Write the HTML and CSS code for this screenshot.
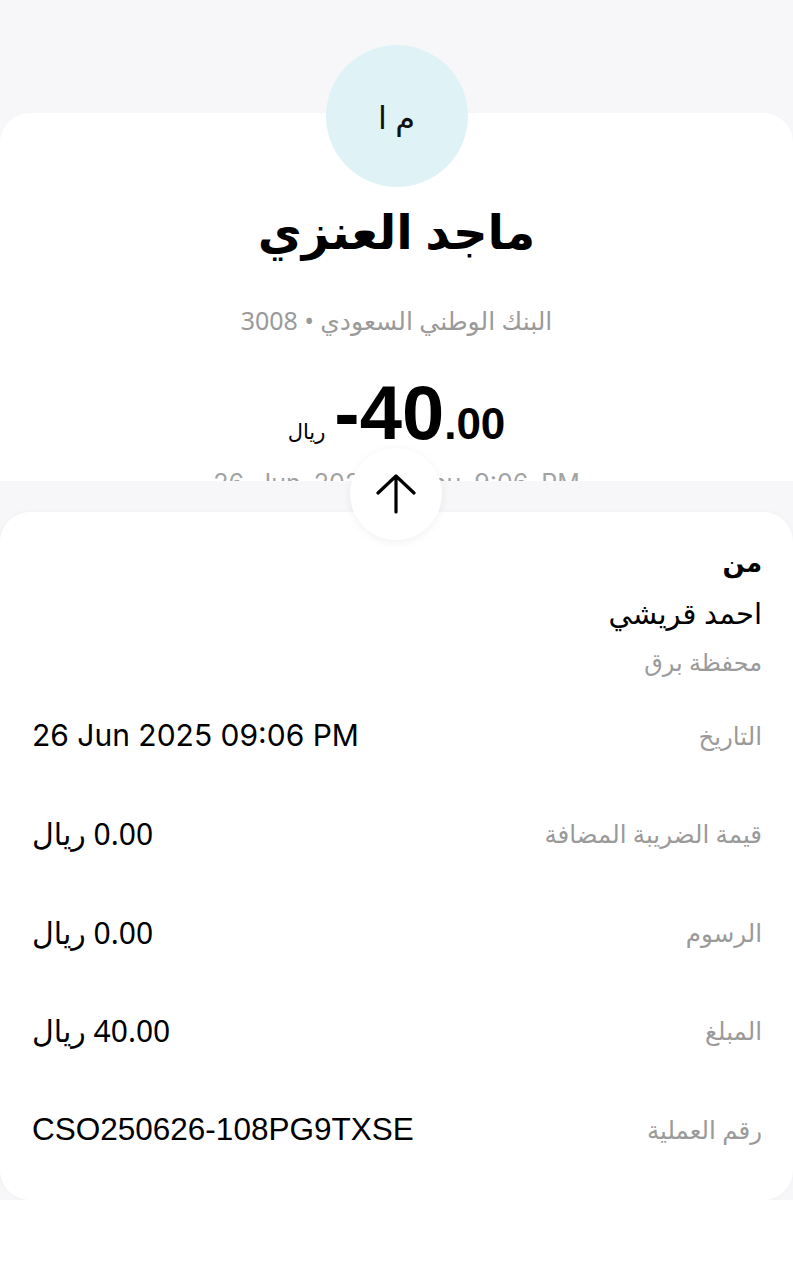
FILE: index.html
```html
<!DOCTYPE html>
<html lang="ar" dir="rtl">
<head>
<meta charset="utf-8">
<link rel="stylesheet" href="styles.css">
</head>
<body>
<div class="screen">
  <section class="head-card">
    <div class="avatar">م ا</div>
    <h1 class="name">ماجد العنزي</h1>
    <div class="bank">البنك الوطني السعودي • 3008</div>
    <div class="amount">
      <span class="cur">ريال</span>
      <span class="big">-40</span><span class="dec">.00</span>
    </div>
    <div class="date" dir="ltr">26 Jun 2025 • Thu 9:06 PM</div>
  </section>
  <div class="gap"></div>
  <div class="arrow">
    <svg width="44" height="44" viewBox="0 0 44 44" fill="none" stroke="#000" stroke-width="3.2" stroke-linecap="round" stroke-linejoin="round"><path d="M22 4V40M4 21L22 4L40 21"/></svg>
  </div>
  <section class="detail-card">
    <div class="from-title">من</div>
    <div class="from-name">احمد قريشي</div>
    <div class="from-wallet">محفظة برق</div>
    <div class="row"><span class="label">التاريخ</span><span class="value latin" dir="ltr">26 Jun 2025 09:06 PM</span></div>
    <div class="row"><span class="label">قيمة الضريبة المضافة</span><span class="value">0.00 ريال</span></div>
    <div class="row"><span class="label">الرسوم</span><span class="value">0.00 ريال</span></div>
    <div class="row"><span class="label">المبلغ</span><span class="value">40.00 ريال</span></div>
    <div class="row"><span class="label">رقم العملية</span><span class="value mono" dir="ltr">CSO250626-108PG9TXSE</span></div>
  </section>
</div>
</body>
</html>
```
FILE: styles.css
```css
html, body {
  margin: 0;
  padding: 0;
  background: #ffffff;
}
body {
  font-family: "Noto Sans", "DejaVu Sans", sans-serif;
  color: #000;
}
.screen {
  position: relative;
  background: #f7f7fa;
  padding-top: 113px;
  height: 1087px;
}
.head-card {
  background: #fff;
  border-radius: 30px 30px 0 0;
  height: 368px;
  display: flex;
  flex-direction: column;
  align-items: center;
  clip-path: inset(-80px 0 0 0);
}
.avatar {
  flex-shrink: 0;
  width: 142px;
  height: 142px;
  border-radius: 50%;
  background: #dff3f6;
  margin-top: -68px;
  display: flex;
  align-items: center;
  justify-content: center;
  font-size: 32px;
  color: #111;
}
.name {
  flex-shrink: 0;
  margin: 14px 0 0;
  font-size: 48px;
  font-weight: 700;
  line-height: 60px;
}
.bank {
  flex-shrink: 0;
  margin-top: 44px;
  font-size: 25px;
  line-height: 30px;
  color: #9a9a9a;
}
.amount {
  flex-shrink: 0;
  direction: ltr;
  margin-top: 46px;
  display: flex;
  align-items: baseline;
  font-family: "Liberation Sans", Arial, sans-serif;
  font-weight: 700;
  line-height: 64px;
  height: 64px;
}
.cur {
  font-family: "Noto Sans", "DejaVu Sans", sans-serif;
  font-weight: 400;
  font-size: 21px;
  margin-right: 9px;
}
.big { font-size: 76px; }
.dec { font-size: 44px; }
.date {
  flex-shrink: 0;
  margin-top: 23px;
  font-size: 25px;
  word-spacing: 6px;
  line-height: 30px;
  color: #a2a2a2;
  font-family: "Inter", "Liberation Sans", sans-serif;
}
.gap { height: 31px; }
.arrow {
  position: absolute;
  left: 350px;
  top: 448px;
  width: 92px;
  height: 92px;
  border-radius: 50%;
  background: #fff;
  box-shadow: 0 2px 10px rgba(0,0,0,0.06);
  display: flex;
  align-items: center;
  justify-content: center;
  z-index: 2;
}
.detail-card {
  background: #fff;
  border-radius: 30px;
  height: 688px;
  box-sizing: border-box;
  padding: 32px 31px 22px 32px;
  box-shadow: 0 0 6px rgba(0,0,0,0.03);
}
.from-title {
  font-size: 26px;
  font-weight: 700;
  line-height: 36px;
}
.from-name {
  margin-top: 15px;
  font-size: 29px;
  font-weight: 500;
  line-height: 36px;
}
.from-wallet {
  margin-top: 15px;
  font-size: 24px;
  line-height: 32px;
  color: #9a9a9a;
}
.from-wallet + .row { margin-top: 8px; }
.row {
  height: 98.5px;
  display: flex;
  align-items: center;
  justify-content: space-between;
}
.label {
  font-size: 24.5px;
  color: #9a9a9a;
}
.value {
  font-size: 30px;
  color: #000;
}
.latin {
  font-family: "Inter", "Liberation Sans", sans-serif;
  font-size: 30px;
}
.mono {
  font-family: "Liberation Sans", Arial, sans-serif;
  font-size: 31.5px;
}
```
